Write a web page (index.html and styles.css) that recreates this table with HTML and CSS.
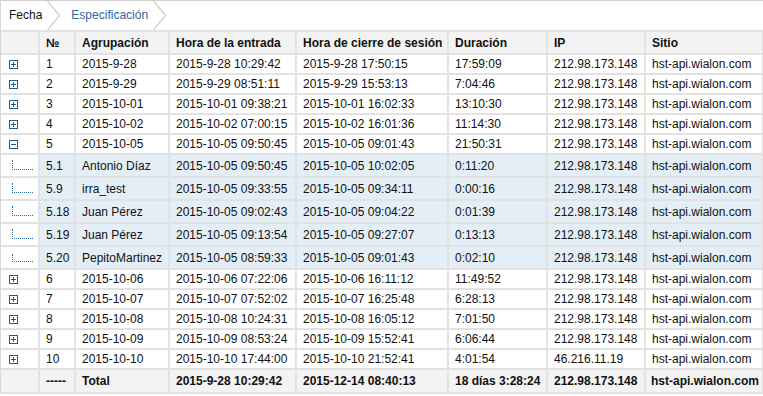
FILE: index.html
```html
<!DOCTYPE html>
<html lang="es">
<head>
<meta charset="utf-8">
<title>Especificación</title>
<link rel="stylesheet" href="styles.css">
</head>
<body>
<div class="panel">
  <nav class="crumbs">
    <span class="crumb">Fecha</span>
    <svg class="chev" width="14" height="29" viewBox="0 0 14 29"><polyline points="0.5,0 12.5,14.5 0.5,29" fill="none" stroke="#d0d0d0" stroke-width="1.4"/></svg>
    <span class="crumb active">Especificación</span>
    <svg class="chev" width="14" height="29" viewBox="0 0 14 29"><polyline points="0.5,0 12.5,14.5 0.5,29" fill="none" stroke="#d0d0d0" stroke-width="1.4"/></svg>
  </nav>
  <table class="grid">
    <colgroup>
      <col class="c-ico"><col class="c-no"><col class="c-grp"><col class="c-in"><col class="c-out"><col class="c-dur"><col class="c-ip"><col class="c-site">
    </colgroup>
    <thead>
      <tr class="head">
        <th></th><th>№</th><th>Agrupación</th><th>Hora de la entrada</th><th>Hora de cierre de sesión</th><th>Duración</th><th>IP</th><th>Sitio</th>
      </tr>
    </thead>
    <tbody>
      <tr class="row"><td class="ico"><svg class="tog" width="9" height="9" viewBox="0 0 9 9"><rect x="0.5" y="0.5" width="8" height="8" fill="#fff" stroke="#1f5b8e"/><path d="M2 4.5H7M4.5 2V7" stroke="#1f5b8e"/></svg></td><td>1</td><td>2015-9-28</td><td>2015-9-28 10:29:42</td><td>2015-9-28 17:50:15</td><td>17:59:09</td><td>212.98.173.148</td><td>hst-api.wialon.com</td></tr>
      <tr class="row"><td class="ico"><svg class="tog" width="9" height="9" viewBox="0 0 9 9"><rect x="0.5" y="0.5" width="8" height="8" fill="#fff" stroke="#1f5b8e"/><path d="M2 4.5H7M4.5 2V7" stroke="#1f5b8e"/></svg></td><td>2</td><td>2015-9-29</td><td>2015-9-29 08:51:11</td><td>2015-9-29 15:53:13</td><td>7:04:46</td><td>212.98.173.148</td><td>hst-api.wialon.com</td></tr>
      <tr class="row"><td class="ico"><svg class="tog" width="9" height="9" viewBox="0 0 9 9"><rect x="0.5" y="0.5" width="8" height="8" fill="#fff" stroke="#1f5b8e"/><path d="M2 4.5H7M4.5 2V7" stroke="#1f5b8e"/></svg></td><td>3</td><td>2015-10-01</td><td>2015-10-01 09:38:21</td><td>2015-10-01 16:02:33</td><td>13:10:30</td><td>212.98.173.148</td><td>hst-api.wialon.com</td></tr>
      <tr class="row"><td class="ico"><svg class="tog" width="9" height="9" viewBox="0 0 9 9"><rect x="0.5" y="0.5" width="8" height="8" fill="#fff" stroke="#1f5b8e"/><path d="M2 4.5H7M4.5 2V7" stroke="#1f5b8e"/></svg></td><td>4</td><td>2015-10-02</td><td>2015-10-02 07:00:15</td><td>2015-10-02 16:01:36</td><td>11:14:30</td><td>212.98.173.148</td><td>hst-api.wialon.com</td></tr>
      <tr class="row"><td class="ico"><svg class="tog" width="9" height="9" viewBox="0 0 9 9"><rect x="0.5" y="0.5" width="8" height="8" fill="#fff" stroke="#1f5b8e"/><path d="M2 4.5H7" stroke="#1f5b8e"/></svg></td><td>5</td><td>2015-10-05</td><td>2015-10-05 09:50:45</td><td>2015-10-05 09:01:43</td><td>21:50:31</td><td>212.98.173.148</td><td>hst-api.wialon.com</td></tr>
      <tr class="sub"><td class="ico"><span class="branch"></span></td><td>5.1</td><td>Antonio Díaz</td><td>2015-10-05 09:50:45</td><td>2015-10-05 10:02:05</td><td>0:11:20</td><td>212.98.173.148</td><td>hst-api.wialon.com</td></tr>
      <tr class="sub"><td class="ico"><span class="branch"></span></td><td>5.9</td><td>irra_test</td><td>2015-10-05 09:33:55</td><td>2015-10-05 09:34:11</td><td>0:00:16</td><td>212.98.173.148</td><td>hst-api.wialon.com</td></tr>
      <tr class="sub"><td class="ico"><span class="branch"></span></td><td>5.18</td><td>Juan Pérez</td><td>2015-10-05 09:02:43</td><td>2015-10-05 09:04:22</td><td>0:01:39</td><td>212.98.173.148</td><td>hst-api.wialon.com</td></tr>
      <tr class="sub"><td class="ico"><span class="branch"></span></td><td>5.19</td><td>Juan Pérez</td><td>2015-10-05 09:13:54</td><td>2015-10-05 09:27:07</td><td>0:13:13</td><td>212.98.173.148</td><td>hst-api.wialon.com</td></tr>
      <tr class="sub"><td class="ico"><span class="branch last"></span></td><td>5.20</td><td>PepitoMartinez</td><td>2015-10-05 08:59:33</td><td>2015-10-05 09:01:43</td><td>0:02:10</td><td>212.98.173.148</td><td>hst-api.wialon.com</td></tr>
      <tr class="row"><td class="ico"><svg class="tog" width="9" height="9" viewBox="0 0 9 9"><rect x="0.5" y="0.5" width="8" height="8" fill="#fff" stroke="#1f5b8e"/><path d="M2 4.5H7M4.5 2V7" stroke="#1f5b8e"/></svg></td><td>6</td><td>2015-10-06</td><td>2015-10-06 07:22:06</td><td>2015-10-06 16:11:12</td><td>11:49:52</td><td>212.98.173.148</td><td>hst-api.wialon.com</td></tr>
      <tr class="row"><td class="ico"><svg class="tog" width="9" height="9" viewBox="0 0 9 9"><rect x="0.5" y="0.5" width="8" height="8" fill="#fff" stroke="#1f5b8e"/><path d="M2 4.5H7M4.5 2V7" stroke="#1f5b8e"/></svg></td><td>7</td><td>2015-10-07</td><td>2015-10-07 07:52:02</td><td>2015-10-07 16:25:48</td><td>6:28:13</td><td>212.98.173.148</td><td>hst-api.wialon.com</td></tr>
      <tr class="row"><td class="ico"><svg class="tog" width="9" height="9" viewBox="0 0 9 9"><rect x="0.5" y="0.5" width="8" height="8" fill="#fff" stroke="#1f5b8e"/><path d="M2 4.5H7M4.5 2V7" stroke="#1f5b8e"/></svg></td><td>8</td><td>2015-10-08</td><td>2015-10-08 10:24:31</td><td>2015-10-08 16:05:12</td><td>7:01:50</td><td>212.98.173.148</td><td>hst-api.wialon.com</td></tr>
      <tr class="row"><td class="ico"><svg class="tog" width="9" height="9" viewBox="0 0 9 9"><rect x="0.5" y="0.5" width="8" height="8" fill="#fff" stroke="#1f5b8e"/><path d="M2 4.5H7M4.5 2V7" stroke="#1f5b8e"/></svg></td><td>9</td><td>2015-10-09</td><td>2015-10-09 08:53:24</td><td>2015-10-09 15:52:41</td><td>6:06:44</td><td>212.98.173.148</td><td>hst-api.wialon.com</td></tr>
      <tr class="row"><td class="ico"><svg class="tog" width="9" height="9" viewBox="0 0 9 9"><rect x="0.5" y="0.5" width="8" height="8" fill="#fff" stroke="#1f5b8e"/><path d="M2 4.5H7M4.5 2V7" stroke="#1f5b8e"/></svg></td><td>10</td><td>2015-10-10</td><td>2015-10-10 17:44:00</td><td>2015-10-10 21:52:41</td><td>4:01:54</td><td>46.216.11.19</td><td>hst-api.wialon.com</td></tr>
    </tbody>
    <tfoot>
      <tr class="total"><td></td><td>-----</td><td>Total</td><td>2015-9-28 10:29:42</td><td>2015-12-14 08:40:13</td><td>18 días 3:28:24</td><td>212.98.173.148</td><td class="site">hst-api.wialon.com</td></tr>
    </tfoot>
  </table>
</div>
</body>
</html>
```
FILE: styles.css
```css
html, body {
  margin: 0;
  padding: 0;
  background: #fff;
}
body {
  font-family: "Liberation Sans", Arial, sans-serif;
  font-size: 12px;
  color: #111;
}
.panel {
  width: 763px;
  border-left: 1px solid #d6d6d6;
  box-sizing: border-box;
}
.crumbs {
  display: flex;
  align-items: center;
  height: 29px;
  border-top: 1px solid #d0d0d0;
  padding-left: 8px;
}
.crumb {
  line-height: 29px;
  white-space: nowrap;
}
.crumb.active {
  color: #2c6aa0;
}
.chev {
  display: block;
  margin: 0 10px 0 5px;
  flex: none;
}
.grid {
  width: 762px;
  border-collapse: collapse;
  table-layout: fixed;
  border-bottom: 2px solid #9a9a9a;
}
.c-ico { width: 38px; }
.c-no { width: 36px; }
.c-grp { width: 94px; }
.c-in { width: 127px; }
.c-out { width: 152px; }
.c-dur { width: 99px; }
.c-ip { width: 98px; }
.c-site { width: 118px; }
.grid th,
.grid td {
  border: 2px solid #e2e2e2;
  padding: 0 0 0 6px;
  text-align: left;
  white-space: nowrap;
  overflow: hidden;
  vertical-align: middle;
}
.grid tr > :first-child { border-left: none; }
.head th {
  background: #f3f3f3;
  font-weight: bold;
  height: 21px;
}
.row td { height: 18px; }
.sub td {
  height: 21px;
  background: #e4eef7;
}
.sub td.ico { background: #fff; }
.total td {
  height: 22px;
  background: #f3f3f3;
  font-weight: bold;
}
.total td.site { padding-left: 5px; }
.grid td.ico {
  padding: 0 0 0 8px;
  line-height: 0;
}
.tog { display: block; }
.branch {
  display: block;
  width: 20px;
  height: 9px;
  margin: -2px 0 0 3px;
  border-left: 1px dotted #2c6aa0;
  border-bottom: 1px dotted #2c6aa0;
}
.branch.last { height: 7px; margin-top: 0; }
```
